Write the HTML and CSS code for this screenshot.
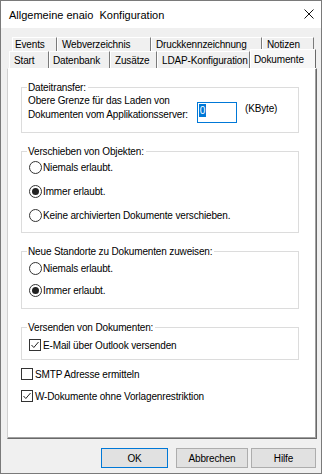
FILE: index.html
```html
<!DOCTYPE html>
<html lang="de">
<head>
<meta charset="utf-8">
<title>Allgemeine enaio Konfiguration</title>
<link rel="stylesheet" href="styles.css">
</head>
<body>
<div class="window">
  <div class="titlebar">
    <span class="title">Allgemeine enaio&nbsp; Konfiguration</span>
    <svg class="close" width="10" height="10" viewBox="0 0 10 10"><path d="M0.5 0.5 L9.5 9.5 M9.5 0.5 L0.5 9.5" stroke="#111" stroke-width="1" fill="none"/></svg>
  </div>
  <div class="client">
    <div class="tabs">
      <div class="tabrow row1">
        <div class="tab t-events">Events</div>
        <div class="tab t-web">Webverzeichnis</div>
        <div class="tab t-druck">Druckkennzeichnung</div>
        <div class="tab t-notiz">Notizen</div>
      </div>
      <div class="tabrow row2">
        <div class="tab t-start">Start</div>
        <div class="tab t-db">Datenbank</div>
        <div class="tab t-zus">Zusätze</div>
        <div class="tab t-ldap">LDAP-Konfiguration</div>
        <div class="tab t-dok selected">Dokumente</div>
      </div>
    </div>
    <div class="panel">
      <fieldset class="group g1">
        <legend>Dateitransfer:</legend>
        <div class="transfer">
          <div class="lbl">Obere Grenze für das Laden von<br>Dokumenten vom Applikationsserver:</div>
          <div class="edit"><span class="sel">0</span></div>
          <div class="unit">(KByte)</div>
        </div>
      </fieldset>
      <fieldset class="group g2">
        <legend>Verschieben von Objekten:</legend>
        <div class="opt"><span class="radio"></span><span class="txt">Niemals erlaubt.</span></div>
        <div class="opt o2"><span class="radio on"></span><span class="txt">Immer erlaubt.</span></div>
        <div class="opt o3"><span class="radio"></span><span class="txt">Keine archivierten Dokumente verschieben.</span></div>
      </fieldset>
      <fieldset class="group g3">
        <legend>Neue Standorte zu Dokumenten zuweisen:</legend>
        <div class="opt"><span class="radio"></span><span class="txt">Niemals erlaubt.</span></div>
        <div class="opt o2"><span class="radio on"></span><span class="txt">Immer erlaubt.</span></div>
      </fieldset>
      <fieldset class="group g4">
        <legend>Versenden von Dokumenten:</legend>
        <div class="opt"><span class="check on"><svg width="12" height="12" viewBox="0 0 12 12"><path d="M2.5 6 L4.8 8.5 L9.5 3" stroke="#222" stroke-width="1" fill="none"/></svg></span><span class="txt">E-Mail über Outlook versenden</span></div>
      </fieldset>
      <div class="opt solo s1"><span class="check"></span><span class="txt">SMTP Adresse ermitteln</span></div>
      <div class="opt solo s2"><span class="check on"><svg width="12" height="12" viewBox="0 0 12 12"><path d="M2.5 6 L4.8 8.5 L9.5 3" stroke="#222" stroke-width="1" fill="none"/></svg></span><span class="txt">W-Dokumente ohne Vorlagenrestriktion</span></div>
    </div>
    <div class="buttons">
      <div class="btn b-ok default">OK</div>
      <div class="btn b-cancel">Abbrechen</div>
      <div class="btn b-help">Hilfe</div>
    </div>
  </div>
</div>
</body>
</html>
```

FILE: styles.css
```css
* { box-sizing: border-box; }
html, body { margin: 0; padding: 0; background: #ffffff; }
body {
  width: 323px;
  height: 475px;
  font-family: "Liberation Sans", Arial, sans-serif;
  font-size: 10px;
  letter-spacing: -0.15px;
  color: #000;
}
.window {
  width: 322px;
  height: 474px;
  border: 1px solid #7a7a7a;
  display: flex;
  flex-direction: column;
}
.titlebar {
  height: 27px;
  background: #fff;
  display: flex;
  align-items: center;
  justify-content: space-between;
  padding: 0 7px 0 8px;
}
.title {
  font-size: 11px;
  letter-spacing: 0;
  white-space: pre;
}
.close { margin-bottom: 1px; }
.client {
  flex: 1;
  background: #f0f0f0;
  padding-top: 9px;
  display: flex;
  flex-direction: column;
}
.tabs {
  height: 31px;
  display: flex;
  flex-direction: column;
}
.tabrow { display: flex; }
.row1 { margin-left: 11px; height: 14px; }
.row2 { margin-left: 8px; height: 17px; align-items: flex-end; }
.tab {
  height: 100%;
  background: #f0f0f0;
  border-top: 1px solid #fff;
  border-left: 1px solid #fff;
  border-right: 1px solid #7a7a7a;
  padding-left: 4px;
  display: flex;
  align-items: center;
  white-space: nowrap;
}
.t-events { width: 45px; padding-left: 2px; }
.t-web { width: 94px; }
.t-druck { width: 111px; }
.t-notiz { width: 52px; }
.t-start { width: 40px; }
.t-db { width: 61px; padding-left: 3px; }
.t-zus { width: 47px; }
.t-ldap { width: 93px; }
.t-dok { width: 66px; padding-left: 3px; }
.tab.selected {
  height: 19px;
  margin-top: -2px;
  border-right: 1px solid #696969;
  background: #f7f7f7;
}
.panel {
  margin-left: 6px;
  width: 310px;
  height: 371px;
  background: #fff;
  border-top: 1px solid #fff;
  border-left: 1px solid #d0d0d0;
  border-right: 1px solid #696969;
  border-bottom: 1px solid #696969;
  box-shadow: inset -1px -1px 0 #a0a0a0;
  padding: 12px 0 0 13px;
}
.group {
  margin: 0;
  width: 278px;
  min-width: 0;
  border: 1px solid #dcdcdc;
  padding: 0 0 0 5px;
}
.group legend {
  padding: 0 2px 0 1px;
  line-height: 13px;
}
.g1 { padding-bottom: 9px; }
.transfer { display: flex; align-items: flex-start; }
.lbl { width: 169px; margin-left: 1px; line-height: 14px; }
.edit {
  width: 40px;
  height: 21px;
  margin-top: 8px;
  border: 1px solid #0078d7;
  background: #fff;
  padding: 1px 0 0 1px;
}
.sel {
  display: block;
  width: 7px;
  height: 13px;
  background: #0078d7;
  color: #fff;
  line-height: 13px;
  text-align: center;
}
.unit { margin: 8px 0 0 8px; line-height: 14px; }
.g2 { margin-top: 12px; padding-top: 2px; padding-bottom: 10px; }
.g3 { margin-top: 12px; padding-top: 3px; padding-bottom: 11px; }
.g4 { margin-top: 12px; padding-top: 4px; padding-bottom: 7px; }
.opt {
  height: 14px;
  display: flex;
  align-items: center;
  margin-left: 2px;
  white-space: nowrap;
}
.g2 .o2, .g2 .o3 { margin-top: 10px; }
.g3 .o2 { margin-top: 8px; }
.radio {
  width: 13px;
  height: 13px;
  border: 1px solid #333;
  border-radius: 50%;
  background: #fff;
  display: flex;
  align-items: center;
  justify-content: center;
  flex: none;
}
.radio.on::after {
  content: "";
  width: 7px;
  height: 7px;
  border-radius: 50%;
  background: #222;
}
.radio + .txt { margin-left: 1px; }
.check {
  width: 12px;
  height: 12px;
  border: 1px solid #333;
  background: #fff;
  flex: none;
  display: flex;
  align-items: center;
  justify-content: center;
}
.check svg { flex: none; }
.txt { margin-left: 2px; }
.solo { margin-left: 0; }
.s1 { margin-top: 7px; }
.s2 { margin-top: 8px; }
.buttons {
  margin-top: 9px;
  height: 20px;
  display: flex;
  justify-content: flex-end;
  padding-right: 5px;
}
.btn {
  height: 20px;
  background: #e1e1e1;
  border: 1px solid #adadad;
  display: flex;
  align-items: center;
  justify-content: center;
}
.btn.default { border-color: #0078d7; }
.b-ok { width: 67px; margin-right: 8px; }
.b-cancel { width: 72px; margin-right: 3px; }
.b-help { width: 65px; }
```
